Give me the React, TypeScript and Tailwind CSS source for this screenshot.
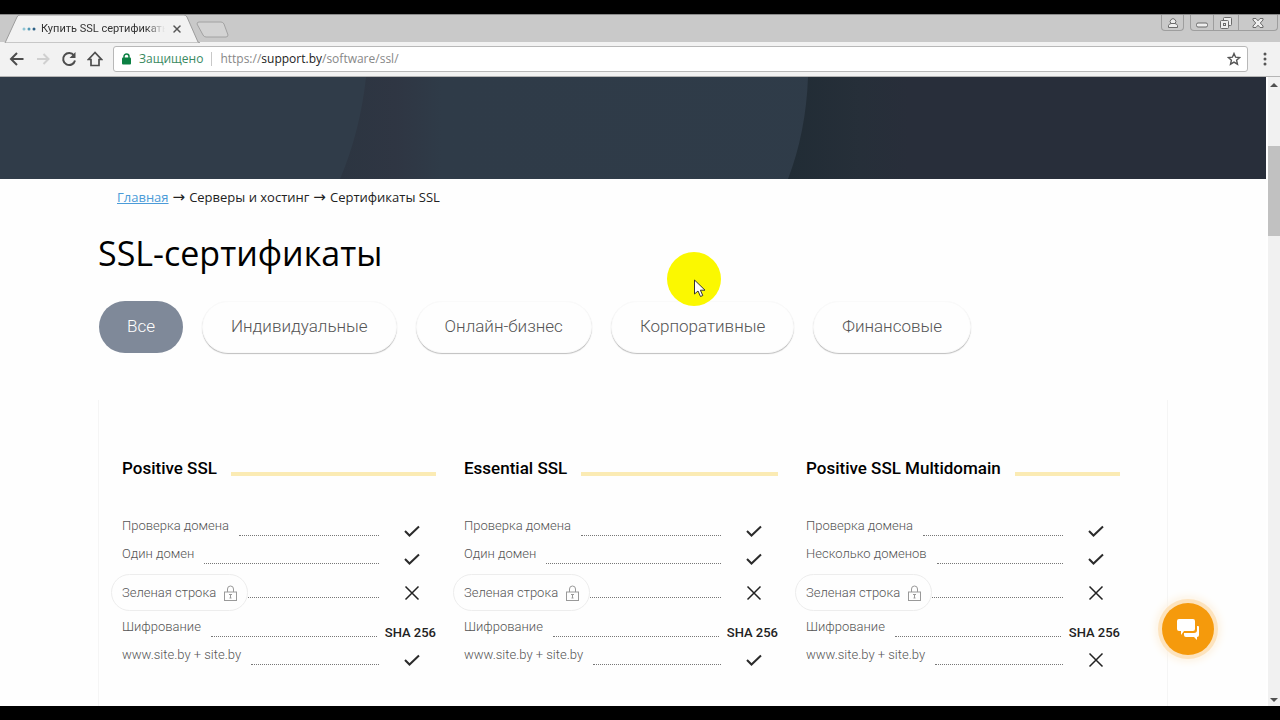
import { X } from "lucide-react";

const filters = ["Все", "Индивидуальные", "Онлайн-бизнес", "Корпоративные", "Финансовые"];

type Feature = { label: string; value: boolean | string; hint?: boolean };

const plans: { name: string; features: Feature[] }[] = [
  {
    name: "Positive SSL",
    features: [
      { label: "Проверка домена", value: true },
      { label: "Один домен", value: true },
      { label: "Зеленая строка", value: false, hint: true },
      { label: "Шифрование", value: "SHA 256" },
      { label: "www.site.by + site.by", value: true },
    ],
  },
  {
    name: "Essential SSL",
    features: [
      { label: "Проверка домена", value: true },
      { label: "Один домен", value: true },
      { label: "Зеленая строка", value: false, hint: true },
      { label: "Шифрование", value: "SHA 256" },
      { label: "www.site.by + site.by", value: true },
    ],
  },
  {
    name: "Positive SSL Multidomain",
    features: [
      { label: "Проверка домена", value: true },
      { label: "Несколько доменов", value: true },
      { label: "Зеленая строка", value: false, hint: true },
      { label: "Шифрование", value: "SHA 256" },
      { label: "www.site.by + site.by", value: false },
    ],
  },
];

function LockIcon() {
  return (
    <svg viewBox="0 0 13 16" className="h-4 w-[13px]" fill="none" stroke="#999" aria-hidden="true">
      <path d="M3.5 7V4a3 3 0 0 1 6 0v3" />
      <rect x="0.5" y="7" width="12" height="8.5" />
      <path d="M5 9.5h3M6.5 9.5V13M5.5 13h2" />
    </svg>
  );
}

function FeatureValue({ value }: { value: boolean | string }) {
  if (typeof value === "string") {
    return <span className="ml-2 text-[13px] leading-5 font-medium text-[#222]">{value}</span>;
  }
  return (
    <span className="flex w-[57px] shrink-0 items-center justify-end pr-4">
      {value ? (
        <svg viewBox="0 0 16 16" className="size-4" fill="none" stroke="#2b2b2b" strokeWidth="2" role="img" aria-label="Да">
          <path d="M1 8L5.5 12.5L15 3.5" />
        </svg>
      ) : (
        <svg viewBox="0 0 16 16" className="size-4" stroke="#222" strokeWidth="1.5" role="img" aria-label="Нет">
          <path d="M1.5 1.5l13 13M14.5 1.5l-13 13" />
        </svg>
      )}
    </span>
  );
}

function FeatureRow({ label, value, hint }: Feature) {
  if (hint) {
    return (
      <li className="flex h-[45px] pt-1.5 pb-0.5">
        <button className="-ml-[11px] flex items-center gap-2 rounded-full border border-[#ededed] px-2.5 text-[13px] font-light text-[#555]">
          {label}
          <LockIcon />
        </button>
        <span className="mb-[13px] flex-1 self-end border-b border-dotted border-[#777]" />
        <FeatureValue value={value} />
      </li>
    );
  }
  return (
    <li className="flex h-7">
      <span className="text-[13px] leading-7 font-light text-[#555]">{label}</span>
      <span className="mb-1 ml-2.5 flex-1 self-end border-b border-dotted border-[#777]" />
      <span className="flex pt-2.5">
        <FeatureValue value={value} />
      </span>
    </li>
  );
}

function BrowserTabs() {
  return (
    <div className="flex h-7 shrink-0 items-start justify-between border-t border-[#8a8a8a] bg-[#c9c9c9]">
      <div className="flex items-start">
        <div className="relative h-7 w-[200px]">
          <svg viewBox="0 0 200 28" className="absolute inset-0 h-7 w-[200px]" aria-hidden="true">
            <path d="M5 28L17 2Q18 0 20 0H184Q186 0 187 2L198 27L200 28Z" fill="#f2f2f2" stroke="#9c9c9c" />
          </svg>
          <div className="relative flex h-7 items-center pl-[22px]">
            <svg viewBox="0 0 14 4" className="h-1 w-3.5" aria-hidden="true">
              <circle cx="2" cy="2" r="1.5" fill="#8fc4d4" />
              <circle cx="7" cy="2" r="1.5" fill="#5299b5" />
              <circle cx="12" cy="2" r="1.5" fill="#2c5f85" />
            </svg>
            <span className="ml-[5px] w-[124px] mask-r-from-85% font-['Roboto',sans-serif] text-[11px] whitespace-nowrap text-[#333]">
              Купить SSL сертификаты
            </span>
            <button aria-label="Закрыть вкладку" className="ml-1.5">
              <X className="size-3" strokeWidth={3} color="#555" />
            </button>
          </div>
        </div>
        <button aria-label="Новая вкладка" className="-ml-1 pt-1.5">
          <svg viewBox="0 0 34 17" className="h-[17px] w-[34px]" aria-hidden="true">
            <path d="M3 1H25Q27 1 28 3L32 14Q32 16 30 16H10Q8 16 7 14L1 3Q1 1 3 1Z" fill="#d3d3d3" stroke="#a2a2a2" />
          </svg>
        </button>
      </div>

      {/* Window controls */}
      <div className="flex h-4 pr-0.5 text-[#6b6b6b]">
        <button aria-label="Профиль" className="mr-1.5 flex w-[23px] items-center justify-center rounded-b border border-t-0 border-[#9e9e9e]">
          <svg viewBox="0 0 12 12" className="size-3" fill="#eee" stroke="currentColor" aria-hidden="true">
            <path d="M1.5 10.5V8.5Q2 7 4 6.5A2.8 2.8 0 1 1 8 6.5Q10 7 10.5 8.5V10.5Z" />
            <path d="M4 6.5H8" />
          </svg>
        </button>
        <button aria-label="Свернуть" className="flex w-6 items-center justify-center rounded-bl border border-t-0 border-[#9e9e9e] pt-1">
          <svg viewBox="0 0 12 6" className="h-1.5 w-3" fill="#eee" stroke="currentColor" aria-hidden="true">
            <rect x="0.5" y="1" width="11" height="4" rx="1.5" />
          </svg>
        </button>
        <button aria-label="Развернуть" className="flex w-6 items-center justify-center border-b border-[#9e9e9e]">
          <svg viewBox="0 0 12 12" className="size-3" fill="#eee" stroke="currentColor" aria-hidden="true">
            <rect x="3.5" y="0.5" width="8" height="8" rx="1" />
            <rect x="0.5" y="3.5" width="8" height="8" rx="1" />
            <rect x="3.5" y="6.5" width="2" height="2" />
          </svg>
        </button>
        <button aria-label="Закрыть" className="flex w-10 items-center justify-center rounded-br border border-t-0 border-[#9e9e9e]">
          <svg viewBox="0 0 12 12" className="size-3" fill="#eee" stroke="currentColor" aria-hidden="true">
            <path d="M1 1.5H4L6 3.8L8 1.5H11V3L8.3 6L11 9V10.5H8L6 8.2L4 10.5H1V9L3.7 6L1 3Z" />
          </svg>
        </button>
      </div>
    </div>
  );
}

function Toolbar() {
  return (
    <div className="flex h-[35px] shrink-0 items-center border-b border-[#b5b5b5] bg-[#f2f2f2] px-3 pl-[9px]">
      <div className="flex gap-2.5 pr-2.5">
        <button aria-label="Назад">
          <svg viewBox="0 0 16 16" className="size-4" fill="none" stroke="#4d4d4d" strokeWidth="2" aria-hidden="true">
            <path d="M14.5 8H2.5M8 2L2 8l6 6" />
          </svg>
        </button>
        <button aria-label="Вперёд">
          <svg viewBox="0 0 16 16" className="size-4" fill="none" stroke="#d0d0d0" strokeWidth="2" aria-hidden="true">
            <path d="M2 8h11.5M8.5 3l5 5-5 5" />
          </svg>
        </button>
        <button aria-label="Обновить">
          <svg viewBox="0 0 16 16" className="size-4" fill="none" stroke="#4d4d4d" strokeWidth="2" aria-hidden="true">
            <path d="M13 4.5A6 6 0 1 0 14 9.5" />
            <path d="M14.5 1v6h-6z" fill="#4d4d4d" stroke="none" />
          </svg>
        </button>
        <button aria-label="Домой">
          <svg viewBox="0 0 16 16" className="size-4" fill="none" stroke="#4d4d4d" strokeWidth="1.7" aria-hidden="true">
            <path d="M8 1.5L1.5 8.5H4V14.5H12V8.5H14.5Z" />
          </svg>
        </button>
      </div>
      <div className="flex h-[26px] flex-1 items-center rounded-[3px] border border-[#b8b8b8] bg-white px-1.5 text-xs">
        <svg viewBox="0 0 9 12" className="ml-0.5 h-3 w-[9px]" aria-hidden="true">
          <path d="M2 5V3.5a2.5 2.5 0 0 1 5 0V5" fill="none" stroke="#0b8043" strokeWidth="1.5" />
          <rect y="4.5" width="9" height="7" rx="1" fill="#0b8043" />
        </svg>
        <span className="ml-2 text-[#3a8a5f]">Защищено</span>
        <span className="mx-2 h-3.5 w-px bg-[#c8c8c8]" />
        <span className="flex-1 text-[#888]">
          https://<span className="text-[#222]">support.by</span>/software/ssl/
        </span>
        <button aria-label="Добавить в закладки">
          <svg viewBox="0 0 14 14" className="size-3.5" fill="none" stroke="#555" strokeWidth="1.4" aria-hidden="true">
            <path d="M7 1.5l1.6 3.7 4 .4-3 2.7.9 3.9L7 10.1l-3.5 2.1.9-3.9-3-2.7 4-.4z" />
          </svg>
        </button>
      </div>
      <button aria-label="Меню" className="ml-3.5">
        <svg viewBox="0 0 6 14" className="h-3.5 w-1.5" fill="#555" aria-hidden="true">
          <circle cx="3" cy="2" r="1.5" />
          <circle cx="3" cy="7" r="1.5" />
          <circle cx="3" cy="12" r="1.5" />
        </svg>
      </button>
    </div>
  );
}

function Scrollbar() {
  return (
    <div className="flex w-3.5 shrink-0 flex-col items-center border-l-2 border-white bg-[#f1f1f1] pt-1.5 pb-1" aria-hidden="true">
      <svg viewBox="0 0 8 4" className="h-1 w-2 shrink-0" fill="#505050">
        <path d="M0 4L4 0L8 4Z" />
      </svg>
      <div className="mt-[59px] h-[90px] w-full bg-[#c1c1c1]" />
      <svg viewBox="0 0 8 4" className="mt-auto h-1 w-2 shrink-0" fill="#505050">
        <path d="M0 0L4 4L8 0Z" />
      </svg>
    </div>
  );
}

export default function App() {
  return (
    <div className="flex h-screen flex-col bg-black py-3.5 font-['Open_Sans',sans-serif]">
      <BrowserTabs />
      <Toolbar />
      <div className="relative flex min-h-0 flex-1 bg-[#fefefe]">
        <main className="min-w-0 flex-1 overflow-hidden">
          {/* Bottom part of the hero banner */}
          <svg viewBox="0 0 1266 102" preserveAspectRatio="none" className="block h-[102px] w-full" aria-hidden="true">
            <defs>
              <linearGradient id="mid">
                <stop offset="0" stopColor="#2c3541" />
                <stop offset="0.06" stopColor="#2f3643" />
                <stop offset="0.11" stopColor="#2f3b48" />
                <stop offset="1" stopColor="#2f3c49" />
              </linearGradient>
              <linearGradient id="dark">
                <stop offset="0" stopColor="#212c35" />
                <stop offset="0.15" stopColor="#262f39" />
                <stop offset="0.25" stopColor="#282e3a" />
                <stop offset="1" stopColor="#282e3a" />
              </linearGradient>
            </defs>
            <rect width="1266" height="102" fill="#303c49" />
            <path d="M366 0Q360 55 340 102H1266V0Z" fill="url(#mid)" />
            <path d="M808 0Q806 55 788 102H1266V0Z" fill="url(#dark)" />
          </svg>

          <div className="mx-auto max-w-[1070px]">
            <nav className="flex gap-1 pt-2 pl-[19px] text-[13px] leading-5 text-[#222]">
              <a href="#" className="text-[#4b9bd8] underline">
                Главная
              </a>
              <span className="font-['DejaVu_Sans',sans-serif] text-[15px] leading-5">→</span>
              <span>Серверы и хостинг</span>
              <span className="font-['DejaVu_Sans',sans-serif] text-[15px] leading-5">→</span>
              <span>Сертификаты SSL</span>
            </nav>

            <h1 className="mt-6 text-[34px] leading-11 text-black">SSL-сертификаты</h1>

            <div className="mt-[26px] flex gap-[19px] pl-px font-['Roboto',sans-serif]">
              {filters.map((name, i) => (
                <button
                  key={name}
                  className={
                    i === 0
                      ? "h-[52px] rounded-full bg-[#7f8999] px-7 text-[17px] font-light text-white"
                      : "h-[52px] rounded-full border border-[#fafafa] bg-[#fefefe] px-7 text-[17px] font-light text-[#555] shadow-[0_1px_1px_rgba(0,0,0,0.25)]"
                  }
                >
                  {name}
                </button>
              ))}
            </div>

            <section className="mt-[47px] grid grid-cols-3 gap-7 border-x border-[#f5f5f5] pt-14 pr-[47px] pb-12 pl-[23px] font-['Roboto',sans-serif]">
              {plans.map((plan) => (
                <article key={plan.name}>
                  <div className="flex gap-3.5">
                    <h2 className="text-[17px] leading-6 font-medium text-black">{plan.name}</h2>
                    <span className="mt-4 h-1 flex-1 bg-[#fbebb4]" />
                  </div>
                  <ul className="mt-8">
                    {plan.features.map((feature) => (
                      <FeatureRow key={feature.label} {...feature} />
                    ))}
                  </ul>
                </article>
              ))}
            </section>
          </div>
        </main>
        <Scrollbar />

        <button
          aria-label="Открыть чат"
          className="absolute right-[66px] bottom-[51px] flex size-[52px] items-center justify-center rounded-full bg-[#f59a0c] shadow-[0_0_0_4px_#fde3bd,0_0_8px_6px_#fdf1de]"
        >
          <svg viewBox="0 0 24 22" className="h-[22px] w-6" fill="#fff" aria-hidden="true">
            <path d="M3 1H17Q19 1 19 3V11Q19 13 17 13H8L5 17V13H3Q1 13 1 11V3Q1 1 3 1Z" />
            <path d="M21 8H22Q23 8 23 9V17Q23 19 21 19V22L18 19H10Q8 19 8 17V15H18Q21 15 21 12Z" />
          </svg>
        </button>
      </div>

      {/* Click highlight and mouse pointer */}
      <div className="pointer-events-none absolute top-[252px] left-[667px] size-[54px] rounded-full bg-[#fbf800]">
        <svg viewBox="0 0 12 19" className="absolute top-[27px] left-[27px] h-[19px] w-3" fill="#fff" stroke="#333" aria-hidden="true">
          <path d="M0.5 1V15L4 12L6.5 17.5L8.8 16.5L6.4 11.2H11Z" />
        </svg>
      </div>
    </div>
  );
}
